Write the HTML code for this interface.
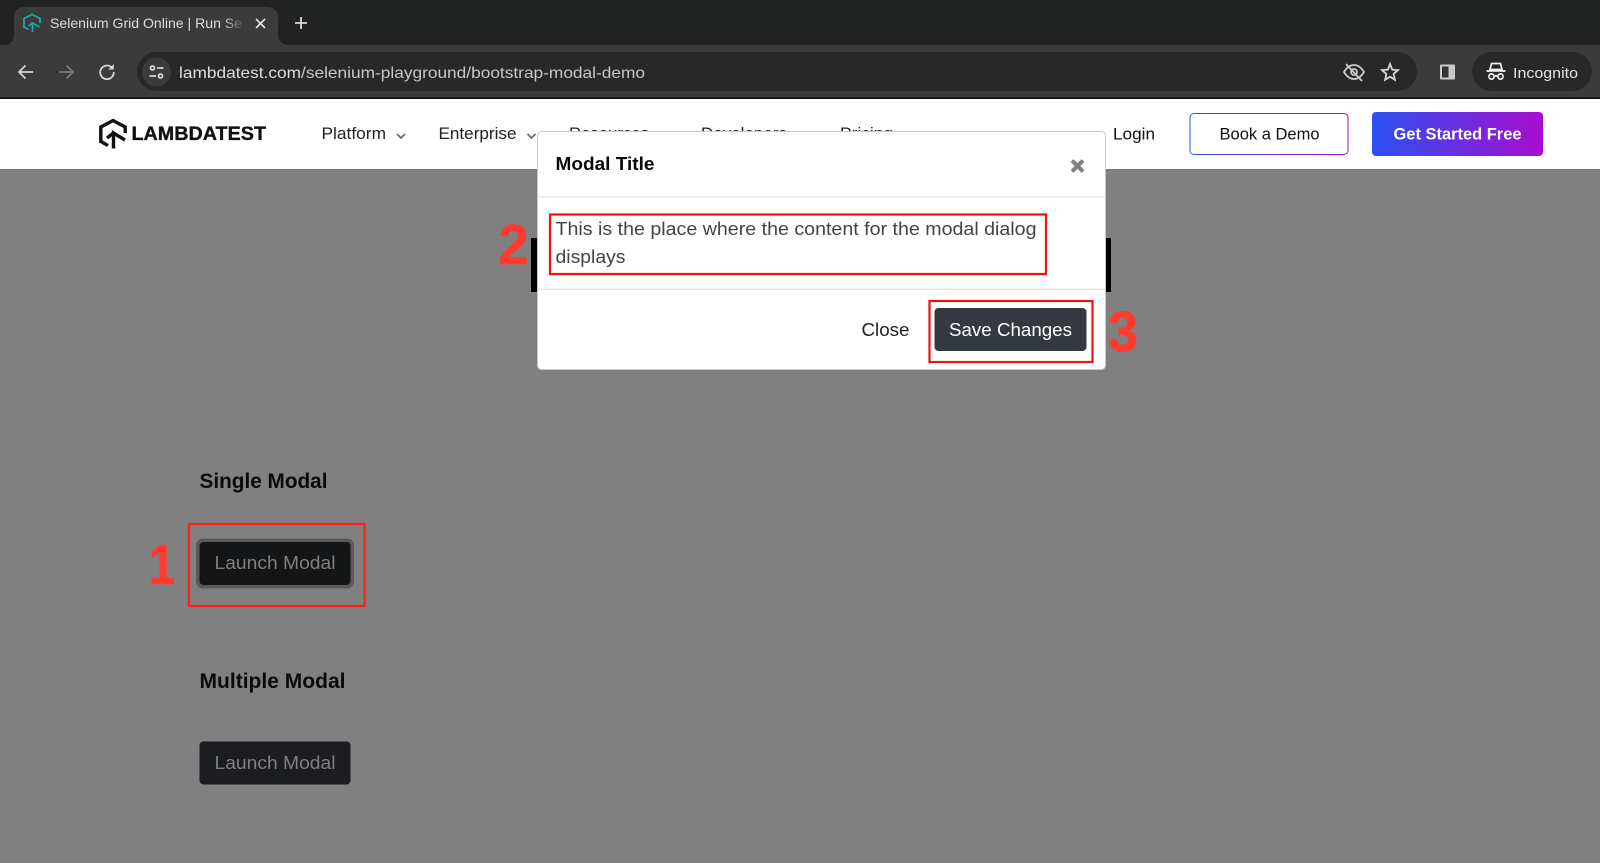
<!DOCTYPE html>
<html lang="en">
<head>
<meta charset="utf-8">
<title>Selenium Grid Online | Run Selenium</title>
<style>
html,body{margin:0;padding:0;width:1600px;height:863px;overflow:hidden;background:#808080}
svg{display:block}
text{font-family:"Liberation Sans",sans-serif}
</style>
</head>
<body>
<svg width="1600" height="863" viewBox="0 0 1600 863" xmlns="http://www.w3.org/2000/svg">
<defs>
<linearGradient id="g1" x1="0" x2="1" y1="0" y2="0"><stop offset="0" stop-color="#2b50f0"/><stop offset="1" stop-color="#a80dcf"/></linearGradient>
<linearGradient id="g2" gradientUnits="userSpaceOnUse" x1="1190" x2="1349" y1="0" y2="0"><stop offset="0" stop-color="#2b50f0"/><stop offset="1" stop-color="#a80dcf"/></linearGradient>
<linearGradient id="fade" x1="0" x2="1" y1="0" y2="0"><stop offset="0" stop-color="#3b3b3b" stop-opacity="0"/><stop offset="1" stop-color="#3b3b3b"/></linearGradient>
</defs>

<!-- browser chrome -->
<rect x="0" y="0" width="1600" height="46" fill="#212322"/>
<rect x="0" y="45" width="1600" height="53" fill="#3b3b3b"/>
<path d="M0 48C9 46 14 41 14 34V18Q14 7 25 7H267Q278 7 278 18V34Q278 45 290 45H0Z" fill="#3b3b3b"/>
<rect x="0" y="97.500" width="1600" height="1.500" fill="#0c0c0c"/>
<!-- favicon -->
<g fill="none" stroke="#1fa6b8" stroke-width="1.800">
<path d="M28.500 29.500L24 27V18.500L32 14.500L40 18.500V23"/>
<path d="M32.500 32V23L39.500 27"/>
<path d="M32.500 23L28.500 26"/>
</g>
<text x="50" y="28" font-size="14" fill="#dedede" textLength="192" lengthAdjust="spacingAndGlyphs">Selenium Grid Online | Run Se</text>
<rect x="222" y="12" width="24" height="24" fill="url(#fade)"/>
<path d="M256 19L265 28M265 19L256 28" stroke="#e3e3e3" stroke-width="1.600" fill="none"/>
<path d="M301 17V29M295 23H307" stroke="#dcdcdc" stroke-width="1.800" fill="none"/>

<!-- toolbar icons -->
<path d="M33 72H19M25.500 65.500L19 72L25.500 78.500" fill="none" stroke="#d6d6d6" stroke-width="1.800"/>
<path d="M59 72H73M66.500 65.500L73 72L66.500 78.500" fill="none" stroke="#7b7b7b" stroke-width="1.800"/>
<path d="M111.800 67.500A6.800 6.800 0 1 0 113.800 72" fill="none" stroke="#d6d6d6" stroke-width="1.800"/>
<path d="M113.800 64V69.500H108.300Z" fill="#d6d6d6"/>

<!-- omnibox -->
<rect x="137" y="52" width="1280" height="39" rx="19.500" fill="#282828"/>
<circle cx="156.500" cy="72" r="14.500" fill="#3b3b3b"/>
<g fill="none" stroke="#e3e3e3" stroke-width="1.600">
<circle cx="152.500" cy="68" r="2"/>
<path d="M157 68H163.500"/>
<circle cx="160.500" cy="76" r="2"/>
<path d="M149.500 76H156"/>
</g>
<text x="179" y="78" font-size="16" fill="#dcdedf" textLength="466" lengthAdjust="spacingAndGlyphs">lambdatest.com<tspan fill="#c6c8c8">/selenium-playground/bootstrap-modal-demo</tspan></text>
<!-- eye off -->
<g fill="none" stroke="#c9c9c9" stroke-width="1.800">
<path d="M1344 72C1347 67 1350 65 1354 65C1358 65 1361 67 1364 72C1361 77 1358 79 1354 79C1350 79 1347 77 1344 72Z"/>
<circle cx="1354" cy="72" r="3"/>
<path d="M1346 64L1362 81"/>
</g>
<!-- star -->
<path d="M1390 64L1392.200 69.600L1398 70.100L1393.600 74L1394.900 79.800L1390 76.700L1385.100 79.800L1386.400 74L1382 70.100L1387.800 69.600Z" fill="none" stroke="#d6d6d6" stroke-width="1.800"/>
<!-- side panel -->
<rect x="1440" y="64.500" width="15" height="15" rx="1" fill="#c9c9c9"/>
<rect x="1442" y="66.500" width="6.500" height="11" fill="#333"/>
<!-- incognito -->
<rect x="1472" y="52" width="120" height="39" rx="19.500" fill="#282828"/>
<g fill="#f0f0f0">
<path d="M1490 69.500H1502L1500.500 63.500H1491.500Z" fill="none" stroke="#f0f0f0" stroke-width="1.700"/>
<rect x="1486.500" y="70" width="19" height="1.800"/>
</g>
<g fill="none" stroke="#f0f0f0" stroke-width="1.700">
<circle cx="1491.500" cy="76.500" r="2.600"/>
<circle cx="1500.500" cy="76.500" r="2.600"/>
<path d="M1494 76H1498"/>
</g>
<text x="1513" y="78" font-size="15" fill="#e0e2e3" textLength="65" lengthAdjust="spacingAndGlyphs">Incognito</text>

<!-- nav -->
<rect x="0" y="99" width="1600" height="70" fill="#fff"/>
<rect x="0" y="169" width="1600" height="1" fill="#767676"/>
<g fill="none" stroke="#111" stroke-width="3.400">
<path d="M108 145.500L100.800 141.500V127L113 120.500L125.200 127V133"/>
<path d="M113.500 148.500V133L125 140"/>
<path d="M113.500 133L107 138"/>
</g>
<text x="131.500" y="140" font-size="19" font-weight="700" fill="#111" stroke="#111" stroke-width=".35" textLength="134.500" lengthAdjust="spacingAndGlyphs">LAMBDATEST</text>
<text x="321.500" y="139" font-size="16.500" fill="#222" textLength="64.500" lengthAdjust="spacingAndGlyphs">Platform</text>
<path d="M397 134L401 138L405 134" fill="none" stroke="#666" stroke-width="1.600"/>
<text x="438.500" y="139" font-size="16.500" fill="#222" textLength="78" lengthAdjust="spacingAndGlyphs">Enterprise</text>
<path d="M527.500 134L531.500 138L535.500 134" fill="none" stroke="#666" stroke-width="1.600"/>
<text x="569" y="139" font-size="16.500" fill="#222" textLength="80" lengthAdjust="spacingAndGlyphs">Resources</text>
<text x="701" y="139" font-size="16.500" fill="#222" textLength="86" lengthAdjust="spacingAndGlyphs">Developers</text>
<text x="840" y="139" font-size="16.500" fill="#222" textLength="53" lengthAdjust="spacingAndGlyphs">Pricing</text>
<text x="1113" y="139.500" font-size="16.500" fill="#111" textLength="42" lengthAdjust="spacingAndGlyphs">Login</text>
<rect x="1190" y="113.500" width="158" height="41" rx="4" fill="#fff" stroke="url(#g2)" stroke-width="1"/>
<text x="1219.500" y="139.500" font-size="16.500" fill="#111" textLength="100" lengthAdjust="spacingAndGlyphs">Book a Demo</text>
<rect x="1372" y="112" width="171" height="44" rx="4" fill="url(#g1)"/>
<text x="1393.500" y="139.500" font-size="16.500" font-weight="700" fill="#fff" textLength="128" lengthAdjust="spacingAndGlyphs">Get Started Free</text>

<!-- page under overlay -->
<rect x="531" y="238" width="6" height="54" fill="#000"/>
<rect x="1105" y="238" width="6" height="54" fill="#000"/>
<text x="199.500" y="488" font-size="21" font-weight="700" fill="#0a0a0a" textLength="128" lengthAdjust="spacingAndGlyphs">Single Modal</text>
<text x="199.500" y="688" font-size="21" font-weight="700" fill="#0a0a0a" textLength="146" lengthAdjust="spacingAndGlyphs">Multiple Modal</text>
<rect x="196" y="538.500" width="158" height="50" rx="7" fill="#5a5a5a"/>
<rect x="199.500" y="542" width="151" height="43" rx="4" fill="#141517"/>
<text x="214.500" y="569" font-size="18" fill="#808080" textLength="121" lengthAdjust="spacingAndGlyphs">Launch Modal</text>
<rect x="199.500" y="741.500" width="151" height="43" rx="4" fill="#1b1d20"/>
<text x="214.500" y="769" font-size="18" fill="#808080" textLength="121" lengthAdjust="spacingAndGlyphs">Launch Modal</text>
<rect x="189" y="524" width="175.500" height="82" fill="none" stroke="#f5261c" stroke-width="2.400"/>
<text x="149" y="584" font-size="57" font-weight="700" fill="#ff3b30" stroke="#ff3b30" stroke-width=".8" textLength="26" lengthAdjust="spacingAndGlyphs">1</text>

<!-- modal -->
<rect x="537.500" y="131.500" width="568" height="238" rx="4" fill="#fff" stroke="#c9c9c9" stroke-width="1"/>
<rect x="538" y="196.500" width="567" height="1.200" fill="#e4e4e4"/>
<rect x="538" y="288.500" width="567" height="1.500" fill="#e8e8e8"/>
<text x="555.500" y="170" font-size="18" font-weight="700" fill="#0a0a0a" textLength="99" lengthAdjust="spacingAndGlyphs">Modal Title</text>
<path d="M1072 160.500L1083 171.500M1083 160.500L1072 171.500" stroke="#808080" stroke-width="4" fill="none"/>
<text x="555.500" y="235" font-size="18.500" fill="#444" textLength="481" lengthAdjust="spacingAndGlyphs">This is the place where the content for the modal dialog</text>
<text x="555.500" y="263" font-size="18.500" fill="#444" textLength="70" lengthAdjust="spacingAndGlyphs">displays</text>
<rect x="550" y="214.500" width="496" height="59.500" fill="none" stroke="#f01010" stroke-width="2.200"/>
<text x="861.500" y="336" font-size="18.500" fill="#222" textLength="48" lengthAdjust="spacingAndGlyphs">Close</text>
<rect x="934.500" y="308" width="152" height="43" rx="4" fill="#343a40"/>
<text x="949" y="336" font-size="18.500" fill="#fff" textLength="123" lengthAdjust="spacingAndGlyphs">Save Changes</text>
<rect x="929.500" y="301" width="163" height="61" fill="none" stroke="#f01010" stroke-width="2.200"/>
<text x="498.500" y="264" font-size="57" font-weight="700" fill="#ff3b30" stroke="#ff3b30" stroke-width=".8" textLength="30" lengthAdjust="spacingAndGlyphs">2</text>
<text x="1108" y="351" font-size="57" font-weight="700" fill="#ff3b30" stroke="#ff3b30" stroke-width=".8" textLength="30" lengthAdjust="spacingAndGlyphs">3</text>
</svg>
</body>
</html>
